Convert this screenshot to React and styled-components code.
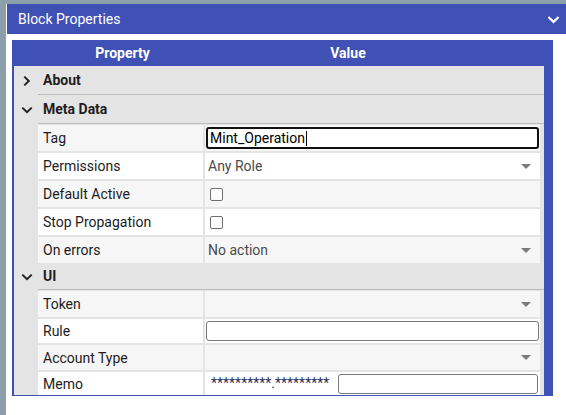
import React from 'react'
import styled, { createGlobalStyle } from 'styled-components'

const Global = createGlobalStyle`
    html, body { margin: 0; padding: 0; background: #fff; }
    body { font-family: Roboto, 'Noto Sans', sans-serif; }
    * { box-sizing: border-box; }
`

const groups = [
    { title: 'About', open: false, rows: [] },
    {
        title: 'Meta Data',
        open: true,
        rows: [
            { label: 'Tag', kind: 'focused', value: 'Mint_Operation' },
            { label: 'Permissions', kind: 'select', value: 'Any Role' },
            { label: 'Default Active', kind: 'check' },
            { label: 'Stop Propagation', kind: 'check' },
            { label: 'On errors', kind: 'select', value: 'No action' },
        ],
    },
    {
        title: 'UI',
        open: true,
        short: true,
        rows: [
            { label: 'Token', kind: 'select', value: '' },
            { label: 'Rule', kind: 'input', h: 24 },
            { label: 'Account Type', kind: 'select', value: '', h: 25 },
            { label: 'Memo', kind: 'memo', h: 23 },
        ],
    },
]

const Chevron = ({ open, color = '#222', size = 12 }) => (
    <svg width={size} height={size} viewBox="0 0 12 12">
        {open
            ? <path d="M1.3 3.6 L6 8.2 L10.7 3.6" fill="none" stroke={color} strokeWidth="2" />
            : <path d="M3.3 1.6 L7.8 6 L3.3 10.4" fill="none" stroke={color} strokeWidth="2" />}
    </svg>
)

const Value = ({ row }) => {
    if (row.kind === 'focused') {
        return (
            <Field $focused>
                {row.value}<Caret />
            </Field>
        )
    }
    if (row.kind === 'input') return <Field />
    if (row.kind === 'check') return <Check />
    if (row.kind === 'memo') {
        return (
            <MemoWrap>
                <Mask>**********.*********</Mask>
                <Field $memo />
            </MemoWrap>
        )
    }
    return (
        <Select>
            <span>{row.value}</span>
            <Arrow />
        </Select>
    )
}

const App = () => {
    return (
        <Page>
            <Global />
            <Window>
                <TitleBar>
                    <span>Block Properties</span>
                    <Chevron open color="#fff" size={13} />
                </TitleBar>
                <Panel>
                    <HeadRow>
                        <div>Property</div>
                        <div>Value</div>
                    </HeadRow>
                    <Body>
                        {groups.map((g) => (
                            <section key={g.title}>
                                <GroupRow $short={g.short}>
                                    <Toggle><Chevron open={g.open} /></Toggle>
                                    <GroupTitle>{g.title}</GroupTitle>
                                </GroupRow>
                                {g.rows.length > 0 && (
                                    <Rows>
                                        {g.rows.map((r, i) => (
                                            <Row key={r.label} $alt={i % 2 === 1} $h={r.h}>
                                                <Label>{r.label}</Label>
                                                <Cell><Value row={r} /></Cell>
                                            </Row>
                                        ))}
                                    </Rows>
                                )}
                            </section>
                        ))}
                    </Body>
                </Panel>
            </Window>
        </Page>
    )
}

const Page = styled.div`
    width: 566px;
    height: 415px;
    background: #8c9fab;
    padding: 4px 0 0 6px;
    overflow: hidden;
`

const Window = styled.div`
    height: 100%;
    background: #fff;
    padding-left: 1px;
`

const TitleBar = styled.div`
    height: 30px;
    background: #3f51b5;
    color: #fff;
    display: flex;
    align-items: center;
    justify-content: space-between;
    padding: 0 6px 0 11px;
    font-size: 14px;
    svg { margin-top: 1px; }
`

const Panel = styled.div`
    width: 541px;
    margin: 6px 0 0 5px;
    background: #3f51b5;
    padding: 0 9px 1px 1px;
`

const HeadRow = styled.div`
    height: 26px;
    display: grid;
    grid-template-columns: 219px 232px;
    align-items: center;
    text-align: center;
    color: #fff;
    font-size: 14px;
    font-weight: 700;
`

const Body = styled.div`
    background: #e4e4e4;
    margin-left: 1px;
`

const GroupRow = styled.div`
    height: ${(p) => (p.$short ? 27 : 29)}px;
    display: flex;
`

const Toggle = styled.div`
    width: 24px;
    display: flex;
    align-items: center;
    justify-content: center;
    padding-left: 2px;
`

const GroupTitle = styled.div`
    flex: 1;
    display: flex;
    align-items: center;
    padding-left: 5px;
    border-bottom: 1px solid #bcbcbc;
    font-size: 14px;
    font-weight: 700;
    color: #1e1e1e;
`

const Rows = styled.div`
    display: grid;
    row-gap: 2px;
    padding: 1px 0 0 24px;
`

const Row = styled.div`
    height: ${(p) => p.$h || 26}px;
    display: grid;
    grid-template-columns: 165px 335px;
    column-gap: 2px;
    background: #e4e4e4;
    > div { background: ${(p) => (p.$alt ? '#ffffff' : '#f6f6f6')}; }
`

const Label = styled.div`
    display: flex;
    align-items: center;
    padding-left: 5px;
    font-size: 14px;
    color: #1c1c1c;
`

const Cell = styled.div`
    display: flex;
    align-items: center;
    padding: 0 1px;
    font-size: 14px;
    color: #4a4a4a;
`

const Field = styled.div`
    height: ${(p) => (p.$focused ? 22 : 20)}px;
    width: ${(p) => (p.$memo ? '200px' : '100%')};
    border: ${(p) => (p.$focused ? '2px solid #111' : '1px solid #777')};
    border-radius: 3px;
    background: #fff;
    display: flex;
    align-items: center;
    padding-left: 2px;
    color: #000;
    font-size: 14px;
`

const Caret = styled.span`
    display: inline-block;
    width: 1px;
    height: 15px;
    background: #000;
    margin-left: 1px;
`

const Check = styled.span`
    width: 13px;
    height: 13px;
    margin-left: 4px;
    border: 1px solid #6f6f6f;
    border-radius: 2px;
    background: #fff;
`

const Select = styled.div`
    flex: 1;
    display: flex;
    align-items: center;
    justify-content: space-between;
    padding: 0 8px 0 2px;
`

const Arrow = styled.span`
    width: 0;
    height: 0;
    border-left: 5px solid transparent;
    border-right: 5px solid transparent;
    border-top: 5px solid #7a7a7a;
`

const MemoWrap = styled.div`
    flex: 1;
    display: flex;
    align-items: center;
    justify-content: space-between;
    padding: 0 1px 0 5px;
`

const Mask = styled.span`
    font-size: 14px;
    color: #2b2f55;
    margin-top: -2px;
`

export default App
